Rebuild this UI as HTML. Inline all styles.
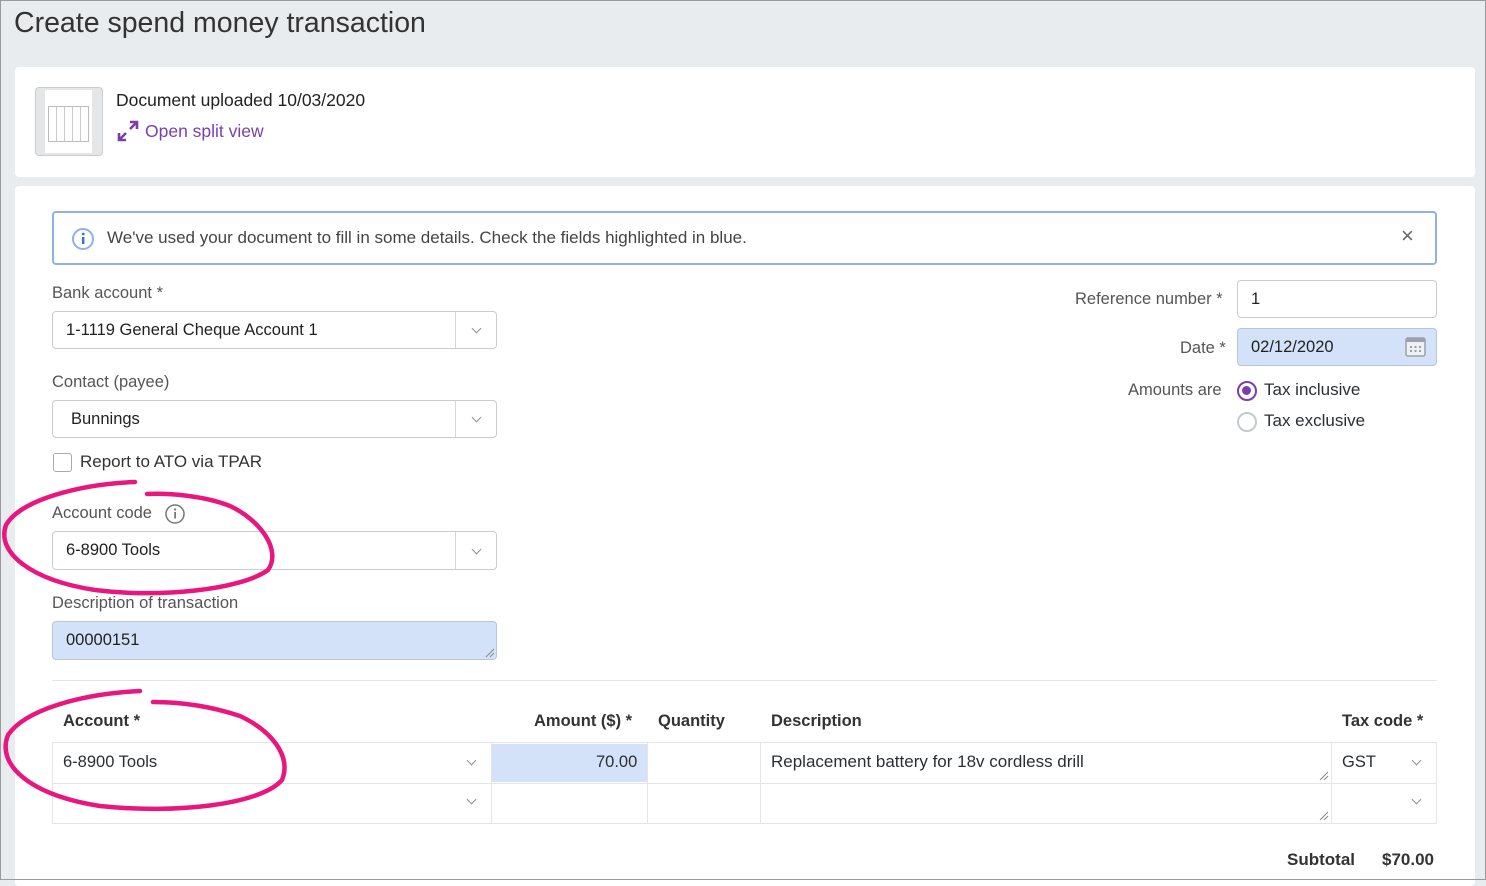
<!DOCTYPE html>
<html><head><style>
*{box-sizing:border-box}
html,body{margin:0}
body{width:1486px;height:880px;overflow:hidden;background:#e9ecef;font-family:"Liberation Sans",sans-serif;color:#2b2f33;position:relative}
.frame{position:absolute;left:0;top:0;width:1486px;height:880px;border:1px solid #9a9a9a;pointer-events:none;z-index:5}
.abs{position:absolute}
h1{position:absolute;left:14px;top:7px;margin:0;font-weight:normal;font-size:28.5px;color:#333}
.card{position:absolute;background:#fff;border-radius:4px}
.lbl{position:absolute;font-size:16.5px;color:#555}
.inp{position:absolute;border:1px solid #c9cdd1;border-radius:4px;background:#fff;font-size:16.5px;color:#222;padding-left:13px;display:flex;align-items:center}
.sel:after{content:"";position:absolute;right:0;top:0;bottom:0;width:40px;border-left:1px solid #d5d8db}
.chev{position:absolute;width:7px;height:7px;border-right:1.5px solid #8a9096;border-bottom:1.5px solid #8a9096;transform:rotate(45deg)}
.th{position:absolute;font-size:16.5px;font-weight:bold;color:#333;top:712px}
.cell{position:absolute;border:1px solid #e3e5e7;font-size:16.5px}
</style></head><body>
<div class="frame"></div>
<h1>Create spend money transaction</h1>
<div class="card" style="left:15px;top:67px;width:1460px;height:110px"></div>
<div class="abs" style="left:35px;top:87px;width:68px;height:69px;border:1px solid #ccc;border-radius:4px;background:#e5e6e8">
 <div class="abs" style="left:9px;top:2px;width:47px;height:63px;background:#fff">
  <div class="abs" style="left:3px;top:16px;width:41px;height:36px;border:1px solid #bbb;background:repeating-linear-gradient(90deg,#fff 0 7px,#ccc 7px 8px)"></div></div></div>
<div class="abs" style="left:116px;top:90px;font-size:17.5px;color:#222">Document uploaded 10/03/2020</div>
<svg class="abs" style="left:117px;top:120px" width="22" height="22" viewBox="0 0 22 22"><path d="M13 2h7v7M20 2l-7 7M2 13v7h7M2 20l7-7" stroke="#7b3fa8" stroke-width="2.6" fill="none"/></svg>
<div class="abs" style="left:145px;top:121px;font-size:17.5px;color:#7b3fa8">Open split view</div>

<div class="card" style="left:15px;top:186px;width:1460px;height:700px"></div>
<div class="abs" style="left:52px;top:211px;width:1385px;height:54px;border:2px solid #8fb0e8;border-radius:4px"></div>
<svg class="abs" style="left:71px;top:227px" width="24" height="24"><circle cx="12" cy="12" r="10" fill="none" stroke="#8fb0e8" stroke-width="2"/><rect x="11" y="10" width="2.4" height="7" fill="#3d6fd0"/><circle cx="12.2" cy="7" r="1.4" fill="#3d6fd0"/></svg>
<div class="abs" style="left:107px;top:228px;font-size:17px;color:#444">We've used your document to fill in some details. Check the fields highlighted in blue.</div>
<div class="abs" style="left:1401px;top:223px;font-size:22px;color:#666">×</div>

<div class="lbl" style="left:52px;top:284px">Bank account *</div>
<div class="inp sel" style="left:52px;top:311px;width:445px;height:38px">1-1119 General Cheque Account 1</div>
<div class="chev" style="left:473px;top:325px"></div>
<div class="lbl" style="left:52px;top:373px">Contact (payee)</div>
<div class="inp sel" style="left:52px;top:400px;width:445px;height:38px;padding-left:18px">Bunnings</div>
<div class="chev" style="left:473px;top:414px"></div>
<div class="abs" style="left:53px;top:453px;width:19px;height:19px;border:1.5px solid #aaa;border-radius:3px"></div>
<div class="abs" style="left:80px;top:452px;font-size:17px;color:#333">Report to ATO via TPAR</div>
<div class="lbl" style="left:52px;top:504px">Account code</div>
<svg class="abs" style="left:164px;top:503px" width="22" height="22"><circle cx="11" cy="11" r="9" fill="none" stroke="#777" stroke-width="1.5"/><rect x="10.2" y="9" width="1.8" height="6.5" fill="#777"/><circle cx="11.1" cy="6.5" r="1.1" fill="#777"/></svg>
<div class="inp sel" style="left:52px;top:531px;width:445px;height:39px">6-8900 Tools</div>
<div class="chev" style="left:473px;top:546px"></div>
<div class="lbl" style="left:52px;top:594px">Description of transaction</div>
<div class="inp" style="left:52px;top:621px;width:445px;height:39px;background:#d3e2f8;border-color:#b6c6dd">00000151</div>

<div class="lbl" style="left:1075px;top:290px">Reference number *</div>
<div class="inp" style="left:1237px;top:280px;width:200px;height:38px">1</div>
<div class="lbl" style="left:1180px;top:339px">Date *</div>
<div class="inp" style="left:1237px;top:328px;width:200px;height:38px;background:#d3e2f8;border-color:#b6c6dd">02/12/2020</div>
<svg class="abs" style="left:1405px;top:337px" width="21" height="20"><rect x="1" y="1" width="19" height="18" rx="2" fill="#eef1f4" stroke="#9aa1a8" stroke-width="1.5"/><rect x="1" y="1" width="19" height="4" fill="#9aa1a8"/><g fill="#9aa1a8"><rect x="5" y="9" width="2" height="2"/><rect x="9.5" y="9" width="2" height="2"/><rect x="14" y="9" width="2" height="2"/><rect x="5" y="13" width="2" height="2"/><rect x="9.5" y="13" width="2" height="2"/><rect x="14" y="13" width="2" height="2"/></g></svg>
<div class="lbl" style="left:1128px;top:381px">Amounts are</div>
<div class="abs" style="left:1237px;top:381px;width:20px;height:20px;border-radius:50%;border:2.5px solid #7b3fa8"><div class="abs" style="left:3px;top:3px;width:9px;height:9px;border-radius:50%;background:#7b3fa8"></div></div>
<div class="abs" style="left:1264px;top:380px;font-size:17px">Tax inclusive</div>
<div class="abs" style="left:1237px;top:412px;width:20px;height:20px;border-radius:50%;border:2px solid #c6c9cc"></div>
<div class="abs" style="left:1264px;top:411px;font-size:17px">Tax exclusive</div>

<div class="abs" style="left:52px;top:680px;width:1385px;height:1px;background:#e3e5e7"></div>
<div class="th" style="left:63px">Account *</div>
<div class="th" style="left:534px">Amount ($) *</div>
<div class="th" style="left:658px">Quantity</div>
<div class="th" style="left:771px">Description</div>
<div class="th" style="left:1342px">Tax code *</div>
<div class="cell" style="left:52px;top:742px;width:1385px;height:82px"></div>
<div class="abs" style="left:52px;top:783px;width:1385px;height:1px;background:#e3e5e7"></div>
<div class="abs" style="left:491px;top:742px;width:1px;height:82px;background:#e3e5e7"></div>
<div class="abs" style="left:647px;top:742px;width:1px;height:82px;background:#e3e5e7"></div>
<div class="abs" style="left:760px;top:742px;width:1px;height:82px;background:#e3e5e7"></div>
<div class="abs" style="left:1331px;top:742px;width:1px;height:82px;background:#e3e5e7"></div>
<div class="abs" style="left:492px;top:744px;width:155px;height:38px;background:#d3e2f8"></div>
<div class="abs" style="left:63px;top:753px;font-size:16.5px">6-8900 Tools</div>
<div class="abs" style="left:596px;top:753px;font-size:16.5px">70.00</div>
<div class="abs" style="left:771px;top:752px;font-size:17px">Replacement battery for 18v cordless drill</div>
<div class="abs" style="left:1342px;top:753px;font-size:16.5px">GST</div>
<div class="chev" style="left:468px;top:757px"></div><div class="chev" style="left:468px;top:796px"></div>
<div class="chev" style="left:1413px;top:757px"></div><div class="chev" style="left:1413px;top:796px"></div>
<svg class="abs" style="left:1319px;top:771px" width="10" height="10"><path d="M1 9L9 1M5 9L9 5" stroke="#888"/></svg>
<svg class="abs" style="left:1319px;top:811px" width="10" height="10"><path d="M1 9L9 1M5 9L9 5" stroke="#888"/></svg>
<svg class="abs" style="left:485px;top:648px" width="10" height="10"><path d="M1 9L9 1M5 9L9 5" stroke="#888"/></svg>
<div class="abs" style="left:1287px;top:850px;font-size:17px;font-weight:bold;color:#333">Subtotal</div>
<div class="abs" style="left:1382px;top:850px;font-size:17px;font-weight:bold;color:#333">$70.00</div>

<svg class="abs" style="left:0;top:0" width="1486" height="880">
<g fill="none" stroke="#e8177f" stroke-width="4.5" stroke-linecap="round">
<path d="M135 482C80 484 20 500 6 525C-4 552 30 580 95 590C160 598 240 590 268 570C282 550 260 520 230 506C205 496 170 493 147 494"/>
<path d="M140 691C80 694 25 710 8 735C-4 765 30 795 100 806C175 814 260 805 282 780C292 755 270 730 240 716C210 706 180 702 153 702"/>
</g></svg>
</body></html>
